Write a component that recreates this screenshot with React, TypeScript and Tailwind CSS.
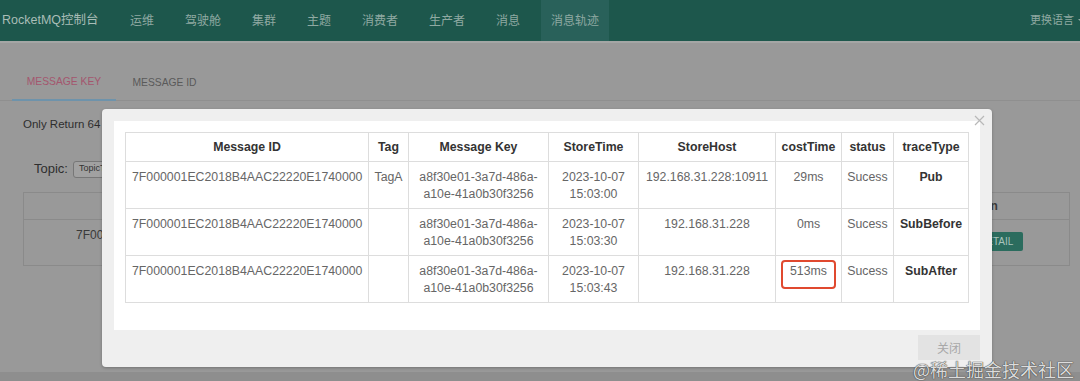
import React from "react"

interface TraceRow {
  msgId: string
  tag: string
  key: [string, string]
  storeTime: [string, string]
  storeHost: string
  costTime: string
  status: string
  traceType: string
  highlight?: boolean
}

const rows: TraceRow[] = [
  {
    msgId: "7F000001EC2018B4AAC22220E1740000",
    tag: "TagA",
    key: ["a8f30e01-3a7d-486a-", "a10e-41a0b30f3256"],
    storeTime: ["2023-10-07", "15:03:00"],
    storeHost: "192.168.31.228:10911",
    costTime: "29ms",
    status: "Sucess",
    traceType: "Pub",
  },
  {
    msgId: "7F000001EC2018B4AAC22220E1740000",
    tag: "",
    key: ["a8f30e01-3a7d-486a-", "a10e-41a0b30f3256"],
    storeTime: ["2023-10-07", "15:03:30"],
    storeHost: "192.168.31.228",
    costTime: "0ms",
    status: "Sucess",
    traceType: "SubBefore",
  },
  {
    msgId: "7F000001EC2018B4AAC22220E1740000",
    tag: "",
    key: ["a8f30e01-3a7d-486a-", "a10e-41a0b30f3256"],
    storeTime: ["2023-10-07", "15:03:43"],
    storeHost: "192.168.31.228",
    costTime: "513ms",
    status: "Sucess",
    traceType: "SubAfter",
    highlight: true,
  },
]

const navItems = ["运维", "驾驶舱", "集群", "主题", "消费者", "生产者", "消息", "消息轨迹"]

const headers = ["Message ID", "Tag", "Message Key", "StoreTime", "StoreHost", "costTime", "status", "traceType"]
const colWidths = ["w-[243px]", "w-[40px]", "w-[140px]", "w-[90px]", "w-[137px]", "w-[66px]", "w-[52px]", "w-[75px]"]

function NavBar() {
  return (
    <div>
      <nav className="flex h-[41px] items-center bg-[#1d574c] font-['Liberation_Sans','Noto_Sans_CJK_SC',sans-serif]">
        <div className="w-[120px] pl-[2px] text-[12.5px] text-[#a9bdb7]">RocketMQ控制台</div>
        <div className="flex h-full gap-[11px]">
          {navItems.map((item) => (
            <div
              key={item}
              className={`flex h-full items-center px-[10px] text-[12px] text-[#8fa9a2] ${
                item === "消息轨迹" ? "bg-[#29615a]" : ""
              }`}
            >
              {item}
            </div>
          ))}
        </div>
        <div className="ml-auto mr-[-6px] flex items-center gap-[4px] text-[11px] text-[#8fa9a2]">
          <span>更换语言</span>
          <span className="h-0 w-0 border-x-[4px] border-t-[4px] border-x-transparent border-t-[#8fa9a2]" />
        </div>
      </nav>
      <div className="h-[2px] bg-[#a4a6a5]" />
    </div>
  )
}

function BackgroundPage() {
  return (
    <div className="flex-1">
      {/* tabs */}
      <div className="mt-[22px] flex h-[36px] border-b border-[#8f8f8f] text-[10.3px]">
        <div className="-mb-px ml-[12px] flex w-[104px] items-center justify-center border-b-2 border-[#6e93ab] text-[#a4566e]">
          MESSAGE KEY
        </div>
        <div className="flex w-[97px] items-center justify-center text-[#5a5a5a]">MESSAGE ID</div>
      </div>

      <div className="mt-[15px] w-[102px] overflow-hidden whitespace-nowrap pl-[23px] text-[11.5px] leading-[16px] text-[#2e2e2e]">
        Only Return 64 Messages
      </div>

      <div className="mt-[28px] flex h-[18px] w-[102px] items-center overflow-hidden pl-[34px]">
        <span className="text-[13px] text-[#2e2e2e]">Topic:</span>
        <div className="ml-[5px] flex h-[17px] w-[90px] shrink-0 items-center rounded-[3px] border border-[#777] bg-[#a1a1a1] pl-[5px] text-[9px] text-[#333]">
          TopicTest
        </div>
      </div>

      {/* results table under the dialog */}
      <div className="ml-[23px] mt-[14px] w-[1047px] border border-[#8a8a8a] text-[12px] text-[#3a3a3a]">
        <div className="flex h-[27px] border-b border-[#8a8a8a]">
          <div className="w-[917px]" />
          <div className="flex w-[130px] items-center pl-[2px] font-bold">Operation</div>
        </div>
        <div className="flex h-[45px]">
          <div className="w-[917px] pl-[52px] pt-[6px]">
            <div className="w-[27px] overflow-hidden whitespace-nowrap">7F000001EC2018B4AAC22220E1740000</div>
          </div>
          <div className="w-[130px] pl-[30px] pt-[12px]">
            <div className="flex h-[19px] w-[54px] items-center justify-center rounded-[2px] bg-[#2b6c5e] text-[10px] text-[#a9c3bc]">
              DETAIL
            </div>
          </div>
        </div>
      </div>
    </div>
  )
}

function TraceTable() {
  return (
    <table className="w-[843px] table-fixed border-collapse text-[12.3px] font-['Liberation_Sans',Arial,sans-serif]">
      <colgroup>
        {colWidths.map((w, i) => (
          <col key={i} className={w} />
        ))}
      </colgroup>
      <thead>
        <tr>
          {headers.map((h) => (
            <th key={h} className="h-[29px] border border-[#dddddd] p-0 text-center font-bold text-[#333333]">
              {h}
            </th>
          ))}
        </tr>
      </thead>
      <tbody>
        {rows.map((r, i) => (
          <tr key={i} className="text-[#666666]">
            <td className="h-[47px] border border-[#dddddd] px-[6px] pt-[7px] align-top leading-[17px] whitespace-nowrap">
              {r.msgId}
            </td>
            <td className="border border-[#dddddd] pt-[7px] text-center align-top leading-[17px]">{r.tag}</td>
            <td className="border border-[#dddddd] pt-[7px] text-center align-top leading-[17px] whitespace-nowrap">
              {r.key[0]}
              <br />
              {r.key[1]}
            </td>
            <td className="border border-[#dddddd] pt-[7px] text-center align-top leading-[17px]">
              {r.storeTime[0]}
              <br />
              {r.storeTime[1]}
            </td>
            <td className="border border-[#dddddd] pt-[7px] text-center align-top leading-[17px] whitespace-nowrap">
              {r.storeHost}
            </td>
            <td className="relative border border-[#dddddd] pt-[7px] text-center align-top leading-[17px]">
              {r.costTime}
              {r.highlight && (
                <span className="absolute left-[5px] right-[5px] top-[4px] h-[29px] rounded-[4px] border-2 border-[#e0492f]" />
              )}
            </td>
            <td className="border border-[#dddddd] pt-[7px] text-center align-top leading-[17px]">{r.status}</td>
            <td className="border border-[#dddddd] pt-[7px] text-center align-top font-bold leading-[17px] text-[#333333]">
              {r.traceType}
            </td>
          </tr>
        ))}
      </tbody>
    </table>
  )
}

function TraceDialog() {
  return (
    <div className="absolute left-[102px] top-[109px] h-[258px] w-[890px] rounded-[4px] bg-[#efefef] px-[12px] pt-[12px] shadow-[0_1px_3px_rgba(0,0,0,0.25)]">
      <button className="absolute right-[7px] top-[6px] text-[#b8b8b8]">
        <svg width="11" height="11" viewBox="0 0 11 11" stroke="currentColor" strokeWidth="1.2">
          <path d="M1 1L10 10M10 1L1 10" />
        </svg>
      </button>
      <div className="h-[209px] bg-white pl-[11px] pt-[11px]">
        <TraceTable />
      </div>
      <div className="mt-[5px] flex justify-end">
        <div className="flex h-[25px] w-[62px] items-center justify-center bg-[#e3e3e3] text-[12px] text-[#a8a8a8] font-['Noto_Sans_CJK_SC',sans-serif]">
          关闭
        </div>
      </div>
    </div>
  )
}

export default function App() {
  return (
    <div className="relative flex h-[381px] w-[1080px] flex-col overflow-hidden bg-[#999999] font-['Liberation_Sans','Noto_Sans_CJK_SC',sans-serif]">
      <NavBar />
      <BackgroundPage />
      <div className="h-[9px] bg-[#8e8e8e]" />
      <TraceDialog />
      <div className="absolute bottom-[3px] right-[6px] text-[18px] leading-none text-[#dcdcdc] font-['Noto_Sans_CJK_SC',sans-serif] [text-shadow:0_0_1px_#3a3a3a,0_0_1px_#3a3a3a]">
        @稀土掘金技术社区
      </div>
    </div>
  )
}
